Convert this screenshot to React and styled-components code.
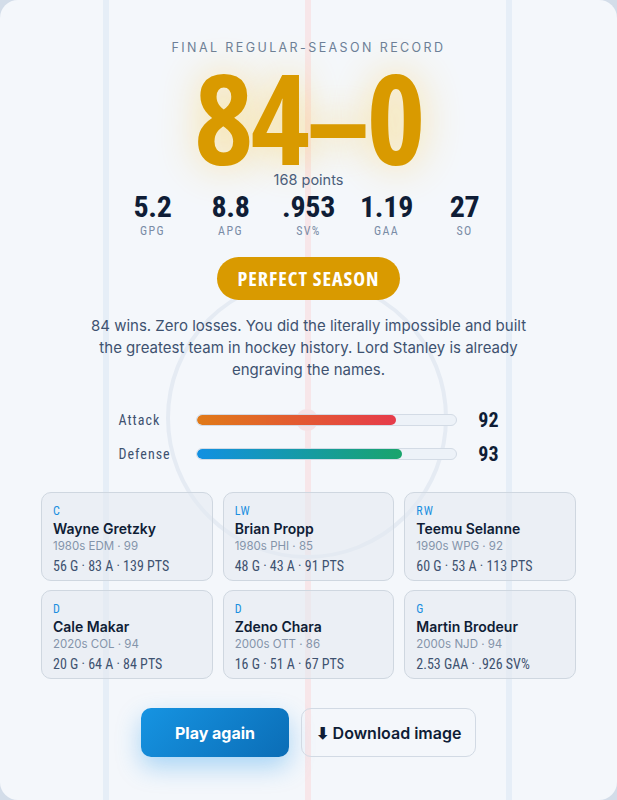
import React from 'react';
import styled, { createGlobalStyle } from 'styled-components';

const Global = createGlobalStyle`
    html, body {
        margin: 0;
        padding: 0;
        background: #d3dde9;
    }
    * {
        box-sizing: border-box;
    }
`;

// condensed faces come from the variable width axis
const DISPLAY = `"Open Sans", sans-serif`;
const COND = `Roboto, sans-serif`;
const SANS = `Inter, "Noto Sans", sans-serif`;

const Card = styled.div`
    position: relative;
    width: 617px;
    height: 800px;
    border-radius: 18px;
    background: #f4f7fb;
    overflow: hidden;
`;

const Rink = styled.svg`
    position: absolute;
    inset: 0;
    pointer-events: none;
`;

const Content = styled.div`
    position: relative;
    display: flex;
    flex-direction: column;
    align-items: center;
    padding: 40px 41px 0;
`;

const Eyebrow = styled.div`
    font-family: ${SANS};
    font-size: 12.5px;
    letter-spacing: 2.4px;
    color: #6c7f98;
    line-height: 16px;
`;

const Record = styled.div`
    margin-top: 10px;
    font-family: ${DISPLAY};
    font-stretch: 75%;
    font-weight: 700;
    font-size: 126px;
    line-height: 100px;
    letter-spacing: -3px;
    color: #d99a00;
    text-shadow: 0 0 40px rgba(255, 196, 40, 0.45);
`;

const Points = styled.div`
    margin-top: 5px;
    font-family: ${SANS};
    font-size: 14.5px;
    color: #4b5e7b;
    line-height: 18px;
`;

const Stats = styled.div`
    display: grid;
    grid-template-columns: repeat(5, 78px);
    margin-top: 2px;
`;

const Stat = styled.div`
    display: flex;
    flex-direction: column;
    align-items: center;
`;

const StatValue = styled.div`
    font-family: ${COND};
    font-stretch: 75%;
    font-weight: 700;
    font-size: 30px;
    line-height: 32px;
    letter-spacing: -0.3px;
    color: #0f1d36;
`;

const StatLabel = styled.div`
    margin-top: 1px;
    font-family: ${COND};
    font-stretch: 75%;
    font-size: 12px;
    letter-spacing: 1.4px;
    color: #7a8ca6;
    line-height: 14px;
`;

const Pill = styled.div`
    margin-top: 19px;
    height: 43px;
    padding: 0 20px;
    border-radius: 22px;
    background: #d99a00;
    color: #fff;
    display: flex;
    align-items: center;
    font-family: ${DISPLAY};
    font-stretch: 75%;
    font-weight: 700;
    font-size: 20px;
    letter-spacing: 1px;
`;

const Blurb = styled.p`
    margin: 15px 0 0;
    max-width: 440px;
    text-align: center;
    font-family: ${SANS};
    font-size: 15px;
    line-height: 22px;
    color: #3e5270;
`;

const Meters = styled.div`
    margin-top: 27px;
    width: 380px;
    display: flex;
    flex-direction: column;
    gap: 14px;
`;

const MeterRow = styled.div`
    display: grid;
    grid-template-columns: 77px 261px 1fr;
    align-items: center;
    height: 20px;
`;

const MeterLabel = styled.div`
    font-family: ${COND};
    font-stretch: 75%;
    font-size: 14px;
    letter-spacing: 1px;
    color: #3e5270;
`;

const Track = styled.div`
    height: 12px;
    border-radius: 6px;
    background: #edf2f8;
    border: 1px solid #d3dbe5;
    overflow: hidden;
`;

const Fill = styled.div`
    height: 100%;
    border-radius: 6px;
    background: linear-gradient(90deg, ${p => p.$from}, ${p => p.$to});
`;

const MeterValue = styled.div`
    text-align: right;
    font-family: ${COND};
    font-stretch: 75%;
    font-weight: 700;
    font-size: 20px;
    color: #0f1d36;
`;

const Roster = styled.div`
    margin-top: 30px;
    width: 100%;
    display: grid;
    grid-template-columns: repeat(3, 1fr);
    gap: 9px 10px;
`;

const Player = styled.div`
    height: 89px;
    padding: 11px 11px 0;
    border-radius: 10px;
    border: 1px solid #cfd7e0;
    background: rgba(228, 233, 240, 0.55);
    display: flex;
    flex-direction: column;
`;

const Pos = styled.div`
    font-family: ${COND};
    font-stretch: 75%;
    font-size: 12px;
    letter-spacing: 1px;
    color: #1b8fe0;
    line-height: 14px;
`;

const Name = styled.div`
    margin-top: 2px;
    font-family: ${SANS};
    font-weight: 600;
    font-size: 14px;
    line-height: 18px;
    color: #0f1d36;
`;

const Era = styled.div`
    font-family: ${SANS};
    font-size: 11.5px;
    line-height: 16px;
    color: #8494aa;
`;

const Line = styled.div`
    margin-top: 4px;
    font-family: ${COND};
    font-stretch: 75%;
    font-size: 14px;
    line-height: 16px;
    color: #3e5270;
`;

const Actions = styled.div`
    margin-top: 29px;
    display: flex;
    gap: 12px;
`;

const Button = styled.button`
    height: 49px;
    border-radius: 10px;
    font-family: ${SANS};
    font-size: 16px;
    cursor: pointer;
    ${p => p.$primary ? `
        width: 148px;
        border: none;
        color: #fff;
        font-weight: 700;
        background: linear-gradient(135deg, #1694e2, #0b6db6);
        box-shadow: 0 10px 24px rgba(30, 150, 235, 0.35);
    ` : `
        width: 175px;
        border: 1px solid #d2dae4;
        background: transparent;
        color: #0f1d36;
        font-weight: 600;
    `}
`;

const stats = [
    ['5.2', 'GPG'],
    ['8.8', 'APG'],
    ['.953', 'SV%'],
    ['1.19', 'GAA'],
    ['27', 'SO'],
];

const meters = [
    { label: 'Attack', value: 92, width: 77, from: '#e07a18', to: '#e63c4b' },
    { label: 'Defense', value: 93, width: 79.5, from: '#1290e2', to: '#19a46c' },
];

const roster = [
    { pos: 'C', name: 'Wayne Gretzky', era: '1980s EDM · 99', line: '56 G · 83 A · 139 PTS' },
    { pos: 'LW', name: 'Brian Propp', era: '1980s PHI · 85', line: '48 G · 43 A · 91 PTS' },
    { pos: 'RW', name: 'Teemu Selanne', era: '1990s WPG · 92', line: '60 G · 53 A · 113 PTS' },
    { pos: 'D', name: 'Cale Makar', era: '2020s COL · 94', line: '20 G · 64 A · 84 PTS' },
    { pos: 'D', name: 'Zdeno Chara', era: '2000s OTT · 86', line: '16 G · 51 A · 67 PTS' },
    { pos: 'G', name: 'Martin Brodeur', era: '2000s NJD · 94', line: '2.53 GAA · .926 SV%' },
];

function RinkLines() {
    return (
        <Rink width="617" height="800" viewBox="0 0 617 800">
            <rect x="103" y="0" width="6" height="800" fill="#e6eef7" />
            <rect x="506" y="0" width="6" height="800" fill="#e6eef7" />
            <rect x="305" y="0" width="6" height="800" fill="#f7e6e9" />
            <circle cx="307" cy="418" r="139" fill="none" stroke="#e5ebf3" strokeWidth="4" />
            <circle cx="307" cy="420" r="11" fill="#f6e3e6" />
        </Rink>
    );
}

export default function App() {
    return (
        <>
            <Global />
            <Card>
                <RinkLines />
                <Content>
                    <Eyebrow>FINAL REGULAR-SEASON RECORD</Eyebrow>
                    <Record>84–0</Record>
                    <Points>168 points</Points>
                    <Stats>
                        {stats.map(([v, l]) => (
                            <Stat key={l}>
                                <StatValue>{v}</StatValue>
                                <StatLabel>{l}</StatLabel>
                            </Stat>
                        ))}
                    </Stats>
                    <Pill>PERFECT SEASON</Pill>
                    <Blurb>
                        84 wins. Zero losses. You did the literally impossible and built the greatest team in hockey history. Lord Stanley is already engraving the names.
                    </Blurb>
                    <Meters>
                        {meters.map(m => (
                            <MeterRow key={m.label}>
                                <MeterLabel>{m.label}</MeterLabel>
                                <Track>
                                    <Fill $from={m.from} $to={m.to} style={{ width: `${m.width}%` }} />
                                </Track>
                                <MeterValue>{m.value}</MeterValue>
                            </MeterRow>
                        ))}
                    </Meters>
                    <Roster>
                        {roster.map(p => (
                            <Player key={p.name}>
                                <Pos>{p.pos}</Pos>
                                <Name>{p.name}</Name>
                                <Era>{p.era}</Era>
                                <Line>{p.line}</Line>
                            </Player>
                        ))}
                    </Roster>
                    <Actions>
                        <Button $primary>Play again</Button>
                        <Button>⬇ Download image</Button>
                    </Actions>
                </Content>
            </Card>
        </>
    );
}
